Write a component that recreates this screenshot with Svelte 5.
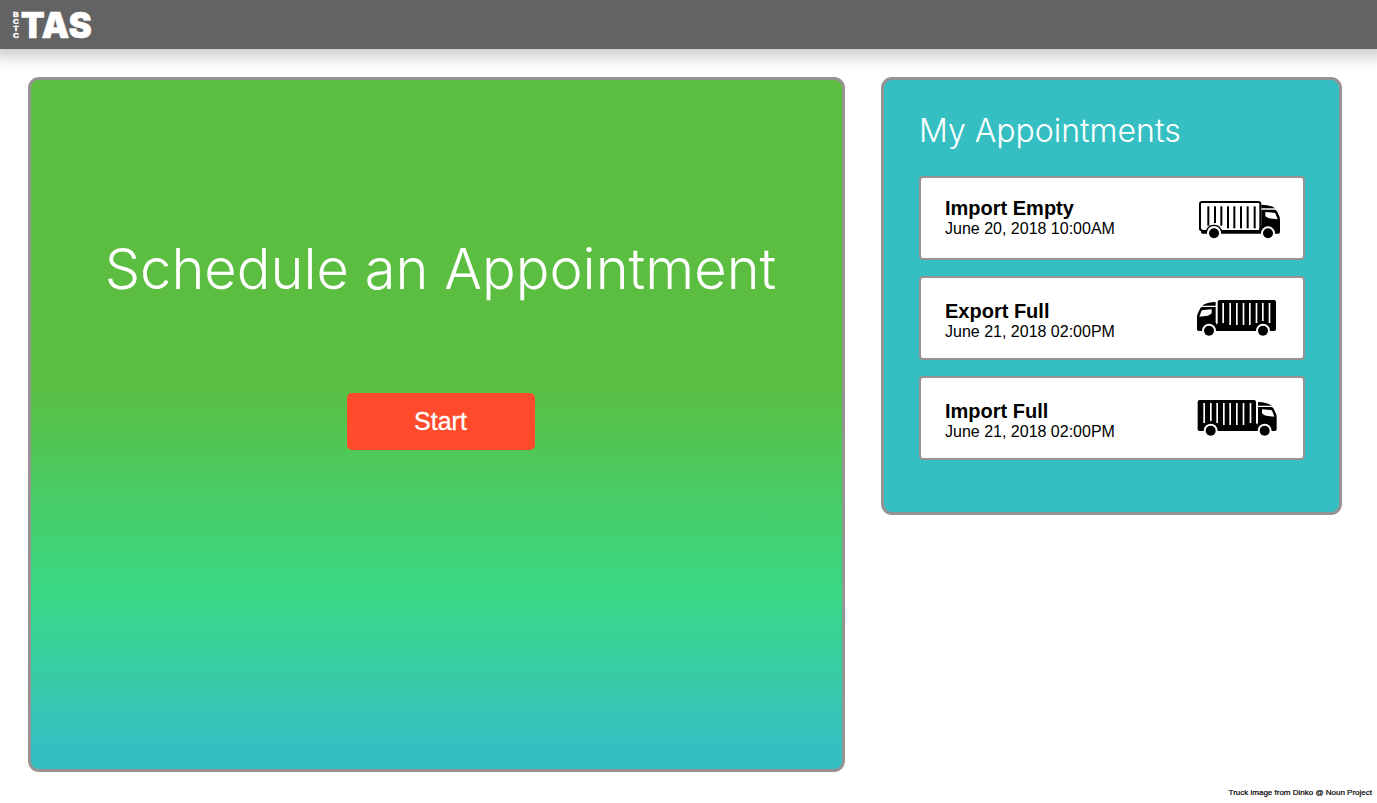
<script>
  const appointments = [
    { title: 'Import Empty', time: 'June 20, 2018 10:00AM', truck: 'empty', flip: false },
    { title: 'Export Full', time: 'June 21, 2018 02:00PM', truck: 'full', flip: true },
    { title: 'Import Full', time: 'June 21, 2018 02:00PM', truck: 'full', flip: false }
  ];
  const slats = [57, 77, 96, 116, 135, 155, 175, 196];
</script>

{#snippet cab()}
  <path d="M219 36 Q245 36 260 47 L219 47 Z" />
  <path
    fill-rule="evenodd"
    d="M219 51 H259 Q264 51 266 56 L273 71 Q275 75 275 82 V118 Q275 123 270 123 H217 V100 L219 98 Z M231 58 V70 Q236 76 243 77 L268 80 L262 64 Q261 60 256 60 Z"
  />
{/snippet}

{#snippet wheels()}
  <circle cx="77" cy="122" r="21" fill="#fff" />
  <circle cx="239" cy="122" r="21" fill="#fff" />
  <circle cx="77" cy="122" r="15" />
  <circle cx="239" cy="122" r="15" />
{/snippet}

<div class="page">
  <header>
    <a class="logo" href="#home" aria-label="BCTC TAS">
      <span class="org"><span>B</span><span>C</span><span>T</span><span>C</span></span>
      <span class="name">TAS</span>
    </a>
  </header>

  <main>
    <section class="panel schedule">
      <h1>Schedule an Appointment</h1>
      <button type="button">Start</button>
    </section>

    <section class="panel mine">
      <h2>My Appointments</h2>
      <ul>
        {#each appointments as a}
          <li class={a.truck}>
            <div class="info">
              <h3>{a.title}</h3>
              <p>{a.time}</p>
            </div>
            <svg viewBox="36 27 252 120" aria-hidden="true">
              {#if a.truck === 'empty'}
                <g transform="translate(10 8)">
                  {@render cab()}
                  <path d="M38 112 H219 V123 H43 Q38 123 38 118 Z" />
                  <rect x="35" y="28" width="181" height="84" rx="6" fill="#fff" stroke="#000" stroke-width="6" />
                  <path d="M38 104 H212 V112 H38 Z" fill="#fff" />
                  <path d="M35 100 V106 Q35 113 42 113" fill="none" stroke="#000" stroke-width="6" />
                  {#each slats as x, i}
                    <rect {x} y="41" width="6" height={i === 0 || i === 2 ? 58 : i === 1 ? 50 : 66} />
                  {/each}
                  <circle cx="77" cy="122" r="20" fill="#fff" />
                  <path d="M55 113 A24 24 0 0 1 99 113" fill="none" stroke="#000" stroke-width="4" />
                  {@render wheels()}
                </g>
              {:else}
                <g transform={a.flip ? 'translate(311 0) scale(-1 1)' : undefined}>
                  {@render cab()}
                  <path d="M44 30 H207 Q213 30 213 36 V100 L219 106 V123 H43 Q38 123 38 118 V36 Q38 30 44 30 Z" />
                  {#each slats as x, i}
                    <rect x={x - 2} y="39" width="5" height={i === 0 || i === 2 || i === 7 ? 60 : i === 1 ? 54 : 66} fill="#fff" />
                  {/each}
                  {@render wheels()}
                </g>
              {/if}
            </svg>
          </li>
        {/each}
      </ul>
    </section>
  </main>

  <footer>Truck image from Dinko @ Noun Project</footer>
</div>

<style>
  :global(body) {
    background: #fff;
  }
  .page {
    box-sizing: border-box;
    min-height: 100vh;
    display: flex;
    flex-direction: column;
    overflow-x: clip;
    font-family: 'Liberation Sans', Arial, sans-serif;
    color: #000;
  }
  h1, h2, h3, p, ul {
    margin: 0;
    padding: 0;
  }
  header {
    height: 49px;
    box-sizing: border-box;
    padding: 0 13px;
    display: flex;
    align-items: center;
    background: #636363;
    box-shadow: 0 1px 12px 8px rgba(0, 0, 0, 0.18);
  }
  .logo {
    display: flex;
    align-items: center;
    gap: 2px;
    color: #fff;
    text-decoration: none;
    font-family: Inter, 'Liberation Sans', sans-serif;
    font-weight: 900;
  }
  .org {
    display: grid;
    justify-items: center;
    font-family: 'Liberation Sans', Arial, sans-serif;
    font-size: 8px;
    line-height: 7px;
    -webkit-text-stroke: 0.5px #fff;
  }
  .name {
    font-size: 35px;
    line-height: 48px;
    -webkit-text-stroke: 0.5px #fff;
  }
  main {
    flex: 1;
    display: grid;
    grid-template-columns: 817fr 461fr;
    gap: 36px;
    align-items: start;
    padding: 28px 35px 0 28px;
  }
  .panel {
    box-sizing: border-box;
    border: 3px solid #979393;
    border-radius: 11px;
  }
  .schedule {
    align-self: stretch;
    display: flex;
    flex-direction: column;
    align-items: center;
    padding: 151px 0 96px 8px;
    background: linear-gradient(#5bbe40 0%, #5bbe40 43%, #39d883 74%, #38d68f 78%, #36bfc2 97%, #36bfc2 100%);
  }
  h1, h2 {
    font-family: Inter, 'Liberation Sans', sans-serif;
    font-weight: 300;
    color: #fff;
  }
  h1 {
    font-size: 56px;
    line-height: 76px;
    white-space: nowrap;
  }
  button {
    width: 188px;
    height: 57px;
    margin-top: 86px;
    border: 0;
    border-radius: 5px;
    background: #ff4b2b;
    color: #fff;
    font: 25px 'Liberation Sans', Arial, sans-serif;
    -webkit-text-stroke: 0.3px #fff;
    cursor: pointer;
  }
  .mine {
    padding: 29px 34px 52px 35px;
    background: #36bfc2;
  }
  h2 {
    font-size: 32px;
    line-height: 44px;
  }
  ul {
    list-style: none;
    margin-top: 23px;
    display: grid;
    gap: 16px;
  }
  li {
    box-sizing: border-box;
    height: 84px;
    display: flex;
    justify-content: space-between;
    padding: 21px 22px 0 24px;
    border: 2px solid #979393;
    border-radius: 4px;
    background: #fff;
  }
  .full .info {
    padding-top: 3px;
  }
  h3 {
    font-size: 20px;
    line-height: 19px;
  }
  p {
    font-size: 16px;
    line-height: 22px;
  }
  svg {
    width: 84px;
    height: 40px;
    flex: none;
  }
  footer {
    padding: 15px 5px 5px;
    text-align: right;
    font-size: 8px;
    line-height: 11px;
    -webkit-text-stroke: 0.2px #000;
  }
</style>
